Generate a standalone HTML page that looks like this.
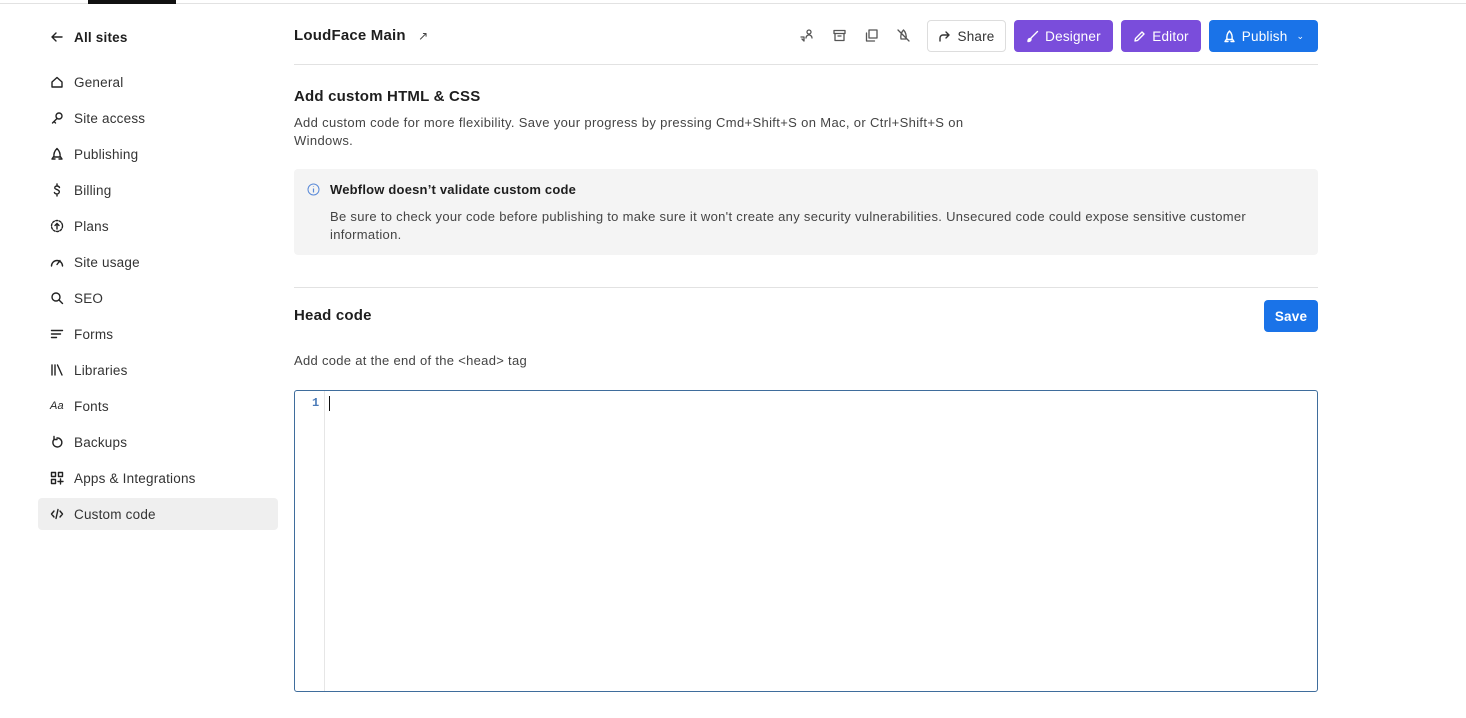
<!DOCTYPE html>
<html><head><meta charset="utf-8"><style>
*{box-sizing:border-box;margin:0;padding:0}
body{width:1466px;height:718px;background:#fff;font-family:"Liberation Sans",sans-serif;color:#1e1e1e;position:relative;overflow:hidden;letter-spacing:0.2px}
.topline{position:absolute;left:0;top:3px;width:1466px;height:1px;background:#e2e2e2}
.topbar{position:absolute;left:88px;top:0;width:88px;height:4px;background:#111}
.nav{position:absolute;left:38px;top:0;width:240px}
.item{position:absolute;left:0;width:240px;height:32px;display:flex;align-items:center;padding-left:12px;font-size:13.5px;color:#333}
.item svg{width:14px;height:14px;margin-right:10px;fill:none;stroke:#222;stroke-width:1.4;stroke-linecap:round;stroke-linejoin:round}
.item.active{background:#efefef;border-radius:4px}
.abs{position:absolute}
.btn{position:absolute;top:20px;height:32px;border-radius:4px;display:flex;align-items:center;justify-content:center;font-size:13.5px;color:#fff}
.btn svg{width:13px;height:13px;margin-right:6px;fill:none;stroke:currentColor;stroke-width:1.4;stroke-linecap:round;stroke-linejoin:round}
.ic{position:absolute;top:28px;width:15px;height:15px;fill:none;stroke:#555;stroke-width:1.3;stroke-linecap:round;stroke-linejoin:round}
</style></head><body>
<div class="topline"></div><div class="topbar"></div>
<div class="nav">
<div class="item" style="top:21px;font-weight:bold;color:#1e1e1e"><svg viewBox="0 0 14 14"><path d="M12 7H2M6 3L2 7l4 4"/></svg>All sites</div>
<div class="item" style="top:66px"><svg viewBox="0 0 14 14"><path d="M2 7L7 2.5 12 7V12H2z"/></svg>General</div>
<div class="item" style="top:102px"><svg viewBox="0 0 14 14"><circle cx="9" cy="5" r="3"/><path d="M7 7.5L2.5 12M4 10.5l1.5 1.5"/></svg>Site access</div>
<div class="item" style="top:138px"><svg viewBox="0 0 14 14"><path d="M7 1.5C9.5 4 10.5 7 10 10H4C3.5 7 4.5 4 7 1.5zM4 9l-2 3h3M10 9l2 3H9"/></svg>Publishing</div>
<div class="item" style="top:174px"><svg viewBox="0 0 14 14"><path d="M9.5 4.5C9 3.5 8 3 7 3 5.5 3 4.5 4 4.8 5.2 5.2 6.5 9 6.5 9.3 8.5 9.5 10 8.3 11 7 11 5.8 11 4.8 10.4 4.4 9.5M7 1v2M7 11v2"/></svg>Billing</div>
<div class="item" style="top:210px"><svg viewBox="0 0 14 14"><circle cx="7" cy="7" r="5.5" stroke-dasharray="2 1.5"/><path d="M7 10V4.5M5 6.5l2-2 2 2"/></svg>Plans</div>
<div class="item" style="top:246px"><svg viewBox="0 0 14 14"><path d="M1.5 11A5.5 5.5 0 0 1 12.5 11M7 9.5l3-4"/></svg>Site usage</div>
<div class="item" style="top:282px"><svg viewBox="0 0 14 14"><circle cx="6" cy="6" r="4"/><path d="M9 9l3.5 3.5"/></svg>SEO</div>
<div class="item" style="top:318px"><svg viewBox="0 0 14 14"><path d="M1.5 3.5h11M1.5 7h9M1.5 10.5h5" /></svg>Forms</div>
<div class="item" style="top:354px"><svg viewBox="0 0 14 14"><path d="M2 2v10M5 2v10M7.5 2l4.5 10"/></svg>Libraries</div>
<div class="item" style="top:390px"><span style="font-size:11px;font-style:italic;width:14px;margin-right:10px;color:#222">Aa</span>Fonts</div>
<div class="item" style="top:426px"><svg viewBox="0 0 14 14"><path d="M4 4.5A4.5 4.5 0 1 0 7 3M4 1.5V4.5H7"/></svg>Backups</div>
<div class="item" style="top:462px"><svg viewBox="0 0 14 14"><rect x="1.5" y="1.5" width="4" height="4"/><rect x="8.5" y="1.5" width="4" height="4"/><rect x="1.5" y="8.5" width="4" height="4"/><path d="M10.5 8v5M8 10.5h5"/></svg>Apps &amp; Integrations</div>
<div class="item active" style="top:498px"><svg viewBox="0 0 14 14"><path d="M4 4L1.5 7 4 10M10 4l2.5 3-2.5 3M8 2.5L6 11.5"/></svg>Custom code</div>
</div>

<div class="abs" style="left:294px;top:27px;font-size:15px;font-weight:bold">LoudFace Main <span style="font-weight:normal;font-size:12px;margin-left:8px;color:#444">↗</span></div>
<svg class="ic" style="left:799px" viewBox="0 0 15 15"><circle cx="10" cy="4" r="2"/><path d="M7 10a3 3 0 0 1 6 0M2 9h3v4M5 13l-2-2"/></svg>
<svg class="ic" style="left:832px" viewBox="0 0 15 15"><rect x="2" y="2.5" width="11" height="3"/><path d="M3 5.5V12.5H12V5.5M6 8h3"/></svg>
<svg class="ic" style="left:864px" viewBox="0 0 15 15"><rect x="5" y="2" width="8" height="8"/><path d="M2.5 5v8h8"/></svg>
<svg class="ic" style="left:896px" viewBox="0 0 15 15"><path d="M7.5 2C10 4.5 10.5 8 10 11H5C4.5 8 5 4.5 7.5 2zM2 2l11 11"/></svg>
<div class="btn" style="left:927px;width:79px;border:1px solid #ddd;background:#fff;color:#333"><svg viewBox="0 0 13 13"><path d="M2 11V8a3 3 0 0 1 3-3h6M8 2l3 3-3 3"/></svg>Share</div>
<div class="btn" style="left:1014px;width:99px;background:#7a4ddb"><svg viewBox="0 0 13 13"><path d="M11.5 1.5L5 8M2 11.5c0-2 1-3 2.5-3l0.5 0.5c0 1.5-1 2.5-3 2.5z" fill="currentColor"/></svg>Designer</div>
<div class="btn" style="left:1121px;width:80px;background:#7a4ddb"><svg viewBox="0 0 13 13"><path d="M9 2l2 2-6.5 6.5L2 11l.5-2.5z"/></svg>Editor</div>
<div class="btn" style="left:1209px;width:109px;background:#1a73e8"><svg viewBox="0 0 13 13"><path d="M6.5 1C9 3.5 9.5 6.5 9 9.5H4C3.5 6.5 4 3.5 6.5 1zM4 8.5L2 11.5h3M9 8.5l2 3H8"/></svg>Publish <span style="font-size:9px;margin-left:9px">⌄</span></div>
<div class="abs" style="left:294px;top:64px;width:1024px;height:1px;background:#e2e2e2"></div>

<div class="abs" style="left:294px;top:88px;font-size:15px;font-weight:bold">Add custom HTML &amp; CSS</div>
<div class="abs" style="left:294px;top:114px;font-size:13px;line-height:18px;color:#444;letter-spacing:0.35px">Add custom code for more flexibility. Save your progress by pressing Cmd+Shift+S on Mac, or Ctrl+Shift+S on<br>Windows.</div>

<div class="abs" style="left:294px;top:169px;width:1024px;height:86px;background:#f4f4f4;border-radius:4px"></div>
<svg class="abs" style="left:307px;top:183px;width:13px;height:13px" viewBox="0 0 13 13"><circle cx="6.5" cy="6.5" r="5.5" fill="none" stroke="#5a8ad8" stroke-width="1"/><path d="M6.5 5.5v4M6.5 3.5v.5" stroke="#5a8ad8" stroke-width="1.2"/></svg>
<div class="abs" style="left:330px;top:182px;font-size:13px;font-weight:bold">Webflow doesn’t validate custom code</div>
<div class="abs" style="left:330px;top:208px;font-size:13px;line-height:18px;color:#444;letter-spacing:0.3px;width:980px">Be sure to check your code before publishing to make sure it won't create any security vulnerabilities. Unsecured code could expose sensitive customer<br>information.</div>

<div class="abs" style="left:294px;top:287px;width:1024px;height:1px;background:#e2e2e2"></div>
<div class="abs" style="left:294px;top:307px;font-size:15px;font-weight:bold">Head code</div>
<div class="btn" style="left:1264px;top:300px;width:54px;background:#1a73e8;font-weight:bold;font-size:13.5px">Save</div>
<div class="abs" style="left:294px;top:353px;font-size:13px;color:#444;letter-spacing:0.3px">Add code at the end of the &lt;head&gt; tag</div>

<div class="abs" style="left:294px;top:390px;width:1024px;height:302px;border:1px solid #3f6d9c;border-radius:3px"></div>
<div class="abs" style="left:324px;top:391px;width:1px;height:300px;background:#e6e6e6"></div>
<div class="abs" style="left:312px;top:396px;font-family:'Liberation Mono',monospace;font-size:12px;color:#4a7ab8;font-weight:bold">1</div>
<div class="abs" style="left:329px;top:396px;width:1px;height:15px;background:#111"></div>
</body></html>
